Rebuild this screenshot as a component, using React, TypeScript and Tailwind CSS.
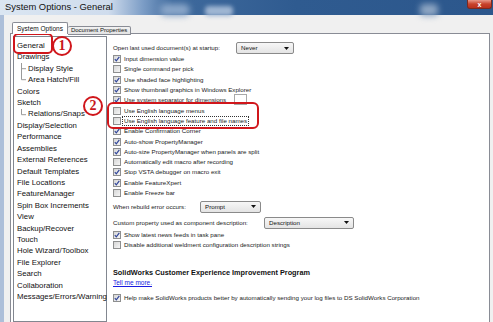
import React from "react";

const checks: [string, boolean][] = [
  ["Input dimension value", true],
  ["Single command per pick", false],
  ["Use shaded face highlighting", true],
  ["Show thumbnail graphics in Windows Explorer", true],
  ["Use system separator for dimensions", true],
  ["Use English language menus", false],
  ["Use English language feature and file names", false],
  ["Enable Confirmation Corner", true],
  ["Auto-show PropertyManager", true],
  ["Auto-size PropertyManager when panels are split", true],
  ["Automatically edit macro after recording", false],
  ["Stop VSTA debugger on macro exit", true],
  ["Enable FeatureXpert", true],
  ["Enable Freeze bar", false],
];

type TreeItem = { label: string; child?: boolean; last?: boolean };
const tree: TreeItem[] = [
  { label: "General" },
  { label: "Drawings" },
  { label: "Display Style", child: true },
  { label: "Area Hatch/Fill", child: true, last: true },
  { label: "Colors" },
  { label: "Sketch" },
  { label: "Relations/Snaps", child: true, last: true },
  { label: "Display/Selection" },
  { label: "Performance" },
  { label: "Assemblies" },
  { label: "External References" },
  { label: "Default Templates" },
  { label: "File Locations" },
  { label: "FeatureManager" },
  { label: "Spin Box Increments" },
  { label: "View" },
  { label: "Backup/Recover" },
  { label: "Touch" },
  { label: "Hole Wizard/Toolbox" },
  { label: "File Explorer" },
  { label: "Search" },
  { label: "Collaboration" },
  { label: "Messages/Errors/Warning" },
];

function Box({ checked }: { checked: boolean }) {
  return (
    <span className="w-[8px] h-[8px] shrink-0 border border-[#8e8f8f] bg-[linear-gradient(135deg,#d6d6d6,#f6f6f6)] flex items-center justify-center">
      {checked && (
        <svg width="6" height="6" viewBox="0 0 6 6">
          <path d="M0.8 3.2 L2.3 4.8 L5.3 0.8" fill="none" stroke="#31469a" strokeWidth="1.2" />
        </svg>
      )}
    </span>
  );
}

function CheckRow({ label, checked, focus }: { label: string; checked: boolean; focus?: boolean }) {
  return (
    <div className="h-[10.3px] flex items-center gap-[2px]">
      <Box checked={checked} />
      <span
        className={
          "text-[6.2px] leading-[8px] text-[#222] whitespace-nowrap px-[1px] " +
          (focus ? "outline outline-1 outline-dotted outline-[#333]" : "")
        }
      >
        {label}
      </span>
    </div>
  );
}

function Drop({ text, w }: { text: string; w: string }) {
  return (
    <div
      className={
        "h-[12px] shrink-0 border border-[#8a8a8a] rounded-[2px] bg-[linear-gradient(#f7f7f7,#e4e4e4)] flex items-center justify-between pl-[4px] pr-[4px] " +
        w
      }
    >
      <span className="text-[6.2px] text-[#111]">{text}</span>
      <svg width="5" height="3" viewBox="0 0 5 3">
        <path d="M0 0 H5 L2.5 3 Z" fill="#111" />
      </svg>
    </div>
  );
}

function Connector({ last }: { last?: boolean }) {
  return (
    <svg width="11" height="11.43" viewBox="0 0 11 11.43" className="shrink-0">
      <line x1="4.5" y1="0" x2="4.5" y2={last ? 5.7 : 11.43} stroke="#9a9a9a" strokeWidth="1" />
      <line x1="4.5" y1="5.7" x2="9" y2="5.7" stroke="#9a9a9a" strokeWidth="1" />
    </svg>
  );
}

function Circle({ n }: { n: string }) {
  return (
    <div className="w-[20px] h-[20px] rounded-full border-[2.5px] border-[#d0161b] bg-white flex items-center justify-center">
      <span className="text-[14px] font-bold leading-none text-[#c8161d] font-['Liberation_Serif',serif]">{n}</span>
    </div>
  );
}

export default function App() {
  return (
    <div className="w-[493px] h-[322px] overflow-hidden relative bg-[#f0f0f0] font-['Liberation_Sans',Arial,sans-serif] flex flex-col">
      {/* Title bar */}
      <div className="h-[15px] shrink-0 relative flex items-center bg-[linear-gradient(90deg,#dbe6f2_0%,#cfdced_22%,#7c9dc6_29%,#3f6a9d_35%,#2f5b90_60%,#2c578c_100%)]">
        <span className="absolute left-[160px] top-[4px] w-[30px] h-[12px] rounded-full bg-[#8aa6c9] blur-[3px]" />
        <span className="absolute left-[205px] top-[6px] w-[28px] h-[10px] rounded-sm bg-[#9fb6d3] blur-[2px]" />
        <span className="absolute left-[420px] top-[4px] w-[18px] h-[12px] rounded-sm bg-[#8fa7c4] blur-[3px]" />
        <span className="relative pl-[5px] text-[9.4px] text-[#111] whitespace-nowrap">System Options - General</span>
        <div className="ml-auto self-start mr-[1px] w-[25px] h-[9px] rounded-b-[3px] border border-[#7a2a20] border-t-0 bg-[linear-gradient(#e9998a,#c8432c_50%,#b8301c)] flex items-center justify-center relative">
          <span className="text-[7px] leading-none font-bold text-white">x</span>
        </div>
      </div>

      {/* Body */}
      <div className="flex-1 flex min-h-0">
        <div className="w-[4px] bg-[#adbfd9] shrink-0" />
        <div className="flex-1 flex flex-col pt-[7px] pl-[6px] pr-[3px] min-w-0">
          {/* Tabs */}
          <div className="flex items-end h-[12px] pl-[2px] relative z-10">
            <div className="h-[12px] px-[4px] border border-[#898c95] border-b-0 bg-white rounded-t-[2px] flex items-center">
              <span className="text-[6.5px] text-[#111] whitespace-nowrap">System Options</span>
            </div>
            <div className="h-[9px] -mb-px px-[3px] border border-[#898c95] border-l-0 bg-[linear-gradient(#f2f2f2,#e3e3e3)] rounded-t-[2px] flex items-center">
              <span className="text-[6px] text-[#111] whitespace-nowrap">Document Properties</span>
            </div>
          </div>
          {/* Panel */}
          <div className="flex-1 -mt-px border-l border-t border-r border-[#898c95] bg-white flex pl-[2px] pt-[2px] min-h-0">
            {/* Tree */}
            <div className="w-[94px] shrink-0 border border-[#828790] bg-white pt-[3px] pl-[3px] flex flex-col">
              {tree.map((t) =>
                t.child ? (
                  <div key={t.label} className="h-[11.43px] flex items-center">
                    <Connector last={t.last} />
                    <span className="text-[7.8px] text-[#111] whitespace-nowrap">{t.label}</span>
                  </div>
                ) : (
                  <div key={t.label} className="h-[11.43px] flex items-center">
                    <span className="text-[7.8px] text-[#111] whitespace-nowrap">{t.label}</span>
                  </div>
                )
              )}
            </div>
            {/* Right content */}
            <div className="flex-1 pl-[6px] pt-[6px] flex flex-col min-w-0">
              <div className="h-[12px] flex items-center">
                <span className="w-[123px] shrink-0 text-[6.2px] text-[#222] whitespace-nowrap">Open last used document(s) at startup:</span>
                <Drop text="Never" w="w-[58px]" />
              </div>
              {checks.map(([l, c], i) =>
                i === 4 ? (
                  <div key={l} className="h-[10.3px] flex items-center">
                    <div className="w-[121px] shrink-0">
                      <CheckRow label={l} checked={c} />
                    </div>
                    <div className="w-[13px] h-[11px] border border-[#a8a8a8] bg-white relative top-[-1px]" />
                  </div>
                ) : (
                  <CheckRow key={l} label={l} checked={c} focus={i === 6} />
                )
              )}
              <div className="mt-[3px] h-[11px] flex items-center">
                <span className="w-[87px] shrink-0 text-[6.2px] text-[#222] whitespace-nowrap">When rebuild error occurs:</span>
                <Drop text="Prompt" w="w-[61px]" />
              </div>
              <div className="mt-[4.5px] h-[12px] flex items-center">
                <span className="w-[151px] shrink-0 text-[6.2px] text-[#222] whitespace-nowrap">Custom property used as component description:</span>
                <Drop text="Description" w="w-[90px]" />
              </div>
              <div className="mt-[1px]">
                <CheckRow label="Show latest news feeds in task pane" checked />
                <CheckRow label="Disable additional weldment configuration description strings" checked={false} />
              </div>
              <div className="mt-[19px] h-[9px] flex items-center">
                <span className="text-[7.3px] font-bold text-[#111] whitespace-nowrap">SolidWorks Customer Experience Improvement Program</span>
              </div>
              <div className="h-[9px] flex items-center">
                <span className="text-[6.5px] text-[#1a1ae0] underline whitespace-nowrap">Tell me more.</span>
              </div>
              <div className="mt-[6px]">
                <CheckRow label="Help make SolidWorks products better by automatically sending your log files to DS SolidWorks Corporation" checked />
              </div>
            </div>
          </div>
        </div>
      </div>

      {/* Annotations */}
      <div className="absolute left-[13px] top-[33px] w-[40px] h-[21px] rounded-[5px] border-2 border-[#d0161b]" />
      <div className="absolute left-[52px] top-[36px]">
        <Circle n="1" />
      </div>
      <div className="absolute left-[83px] top-[96px]">
        <Circle n="2" />
      </div>
      <div className="absolute left-[107px] top-[102px] w-[152px] h-[27px] rounded-[6px] border-2 border-[#d0161b]" />
    </div>
  );
}
